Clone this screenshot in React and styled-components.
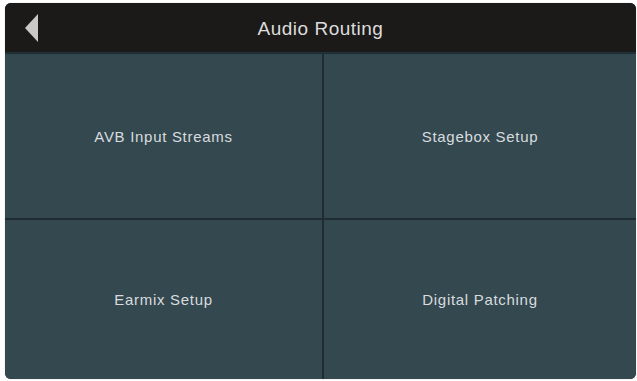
import React from "react";
import styled, { createGlobalStyle } from "styled-components";

const Global = createGlobalStyle`
  html, body { margin: 0; padding: 0; background: #ffffff; }
  body { font-family: "Liberation Sans", Arial, sans-serif; }
`;

const Page = styled.div`
  width: 637px;
  height: 381px;
  padding: 3px 1px 2px 5px;
  box-sizing: border-box;
`;

const Frame = styled.div`
  width: 100%;
  height: 100%;
  display: flex;
  flex-direction: column;
  border-radius: 6px;
  overflow: hidden;
  background: #1f2d32;
  box-shadow: 0 0 1px rgba(0,0,0,0.4);
`;

const Header = styled.div`
  height: 49px;
  flex: none;
  position: relative;
  display: flex;
  align-items: center;
  justify-content: center;
  background: #1c1a19;
  border-bottom: 1px solid #22323a;
`;

const Title = styled.span`
  color: #dcdcdc;
  font-size: 19px;
  letter-spacing: 0.5px;
  margin-top: 2px;
`;

const BackButton = styled.button`
  position: absolute;
  left: 14px;
  top: 10px;
  width: 24px;
  height: 30px;
  padding: 0;
  border: 0;
  background: transparent;
  display: flex;
  align-items: center;
  justify-content: center;
`;

const Grid = styled.div`
  flex: 1;
  display: grid;
  grid-template-columns: 317px 1fr;
  grid-template-rows: 164px 1fr;
  gap: 2px;
  margin-top: 1px;
`;

const Tile = styled.div`
  background: #344850;
  display: flex;
  align-items: center;
  justify-content: center;
  color: #d8dcdf;
  font-size: 15px;
  letter-spacing: 0.7px;
`;

const tiles = ["AVB Input Streams", "Stagebox Setup", "Earmix Setup", "Digital Patching"];

export default function App() {
  return (
    <>
      <Global />
      <Page>
        <Frame>
          <Header>
            <BackButton aria-label="Back">
              <svg width="16" height="30" viewBox="0 0 16 30">
                <polygon points="15,1 15,29 2,15" fill="#c9c9c9" />
              </svg>
            </BackButton>
            <Title>Audio Routing</Title>
          </Header>
          <Grid>
            {tiles.map((t) => (
              <Tile key={t}>{t}</Tile>
            ))}
          </Grid>
        </Frame>
      </Page>
    </>
  );
}
